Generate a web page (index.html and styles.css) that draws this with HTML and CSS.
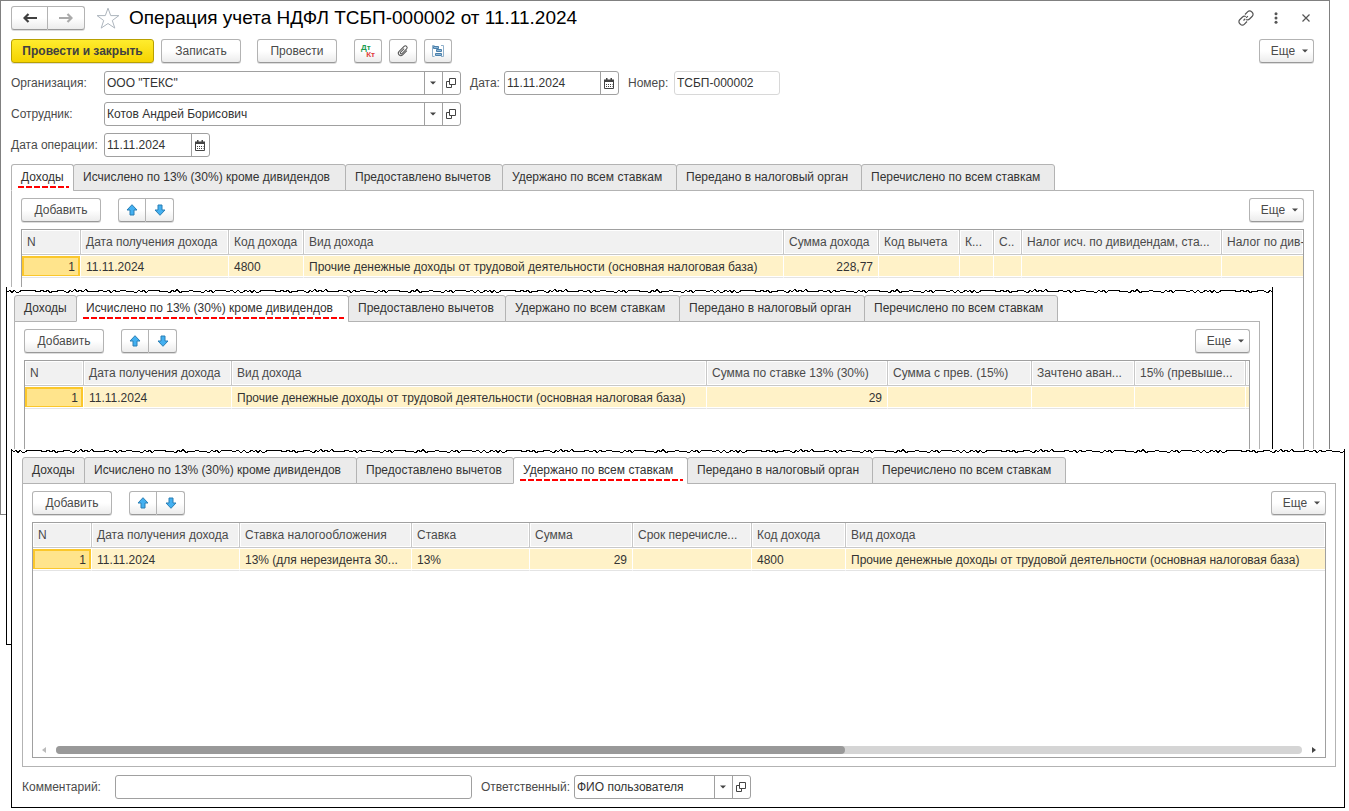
FILE: index.html
```html
<!DOCTYPE html>
<html lang="ru">
<head>
<meta charset="utf-8">
<title>Операция учета НДФЛ ТСБП-000002 от 11.11.2024</title>
<link rel="stylesheet" href="styles.css">
</head>
<body>
<svg class="sprite" aria-hidden="true">
  <symbol id="i-back" viewBox="0 0 14 10"><path d="M5.500 1l-4 4 4 4M2 5h12" fill="none" stroke="currentColor" stroke-width="2.200"/></symbol>
  <symbol id="i-forward" viewBox="0 0 14 10"><path d="M8.500 1l4 4-4 4M12 5H0" fill="none" stroke="currentColor" stroke-width="2.200"/></symbol>
  <symbol id="i-star" viewBox="0 0 24 22"><path d="M12 1.200l2.700 7.400h8.200l-6.600 4.900 2.500 7.600L12 16.500l-6.800 4.600 2.500-7.600L1.100 8.600h8.200z" fill="#fff" stroke="#adb5bd"/></symbol>
  <symbol id="i-link" viewBox="0 0 16 16"><g fill="none" stroke="currentColor" stroke-width="1.200"><path d="M7 4.500l2.800-2.800a2.600 2.600 0 0 1 3.700 0l.8.800a2.600 2.600 0 0 1 0 3.700L11.500 9a2.600 2.600 0 0 1-3.300.4"/><path d="M9 11.500l-2.800 2.800a2.600 2.600 0 0 1-3.700 0l-.8-.8a2.600 2.600 0 0 1 0-3.700L4.500 7a2.600 2.600 0 0 1 3.300-.4"/><path d="M5.500 10.500l5-5" stroke-dasharray="2.500 1.200"/></g></symbol>
  <symbol id="i-dots" viewBox="0 0 4 12"><g fill="currentColor"><circle cx="2" cy="1.700" r="1.500"/><circle cx="2" cy="6" r="1.500"/><circle cx="2" cy="10.300" r="1.500"/></g></symbol>
  <symbol id="i-close" viewBox="0 0 8 8"><path d="M.5.5l7 7M7.500.5l-7 7" stroke="currentColor" stroke-width="1.200"/></symbol>
  <symbol id="i-down" viewBox="0 0 6 4"><path d="M0 .5h6L3 3.500z" fill="currentColor"/></symbol>
  <symbol id="i-open" viewBox="0 0 10 10"><path d="M3.500.5h6v6h-6zM3 3.500H.5v6h5V7" fill="none" stroke="currentColor"/></symbol>
  <symbol id="i-calendar" viewBox="0 0 10 11"><path d="M.5 2.500h9v8h-9z" fill="#fff" stroke="currentColor"/><path d="M0 1.500h10V4H0zM2 0h1.500v2H2zM6.500 0H8v2H6.500z" fill="currentColor"/><path d="M2 6.500h6.500M2 8.500h6.500" stroke="currentColor" stroke-dasharray="1 1"/></symbol>
  <symbol id="i-clip" viewBox="0 0 14 14"><g transform="rotate(45 7 7)" fill="none" stroke="#555"><path d="M9.500 4v6a2.500 2.500 0 0 1-5 0V3a1.800 1.800 0 0 1 3.600 0v6.500a1 1 0 0 1-2 0V4.500"/></g></symbol>
  <symbol id="i-links" viewBox="0 0 14 14"><path d="M3.500 1.500h-2v11h2M10 1.500h2.500v11H10" fill="none" stroke="#8fb0cb"/><path d="M2.500 2.500h5v2h-5zM5.500 5.500h5v2h-5zM4.500 9.500h6v2h-6z" fill="#8fb6d6" stroke="#4a80ab"/></symbol>
  <symbol id="i-up-blue" viewBox="0 0 12 12"><path d="M6 .7l5 5.300H8v5H4V6H1z" fill="#43b0f1" stroke="#2b7fb4"/></symbol>
  <symbol id="i-down-blue" viewBox="0 0 12 12"><path d="M6 11.300L1 6h3V1h4v5h3z" fill="#43b0f1" stroke="#2b7fb4"/></symbol>
  <symbol id="i-scroll-left" viewBox="0 0 4 6"><path d="M4 0v6L0 3z" fill="currentColor"/></symbol>
  <symbol id="i-scroll-right" viewBox="0 0 4 6"><path d="M0 0v6l4-3z" fill="currentColor"/></symbol>
  <pattern id="torn" width="240" height="8" patternUnits="userSpaceOnUse"><path d="M0 3L2 5 4 3 6 6 8 3 10 5 13 5 16 3 21 4 26 3 33 5 36 3 39 5 42 3 44 6 47 4 50 5 53 3 58 4 62 6 64 3 66 5 69 2 71 5 74 3 77 5 80 2 82 5 86 4 90 5 95 3 99 5 103 3 105 6 108 3 111 5 114 4 118 3 122 5 126 4 130 6 133 3 135 5 138 3 140 6 143 3 147 4 151 3 156 5 160 4 164 6 166 3 169 5 171 2 174 6 177 4 181 5 185 3 189 5 193 4 197 6 200 3 202 5 205 3 207 6 210 3 213 4 218 3 222 5 226 3 229 6 232 3 234 5 237 5 240 3" fill="none" stroke="#000" stroke-width="1" shape-rendering="crispEdges"/></pattern>
</svg>

<main class="desktop">

<section class="window window-main" aria-label="Операция учета НДФЛ">
  <header class="titlebar">
    <div class="btn-group">
      <button class="btn btn-nav" aria-label="Назад"><svg class="ic-nav"><use href="#i-back"/></svg></button>
      <button class="btn btn-nav btn-dim" aria-label="Вперед"><svg class="ic-nav"><use href="#i-forward"/></svg></button>
    </div>
    <button class="plain" aria-label="В избранное"><svg class="ic-star"><use href="#i-star"/></svg></button>
    <h1 class="title">Операция учета НДФЛ ТСБП-000002 от 11.11.2024</h1>
    <div class="window-tools">
      <button class="plain" aria-label="Ссылка"><svg class="ic-16"><use href="#i-link"/></svg></button>
      <button class="plain" aria-label="Меню"><svg class="ic-dots"><use href="#i-dots"/></svg></button>
      <button class="plain" aria-label="Закрыть"><svg class="ic-8"><use href="#i-close"/></svg></button>
    </div>
  </header>

  <div class="commands">
    <button class="btn btn-primary">Провести и закрыть</button>
    <button class="btn btn-text">Записать</button>
    <button class="btn btn-text btn-apart">Провести</button>
    <button class="btn btn-icon btn-apart" aria-label="Проводки"><span class="dtkt"><span class="dt">Дт</span><span class="kt">Кт</span></span></button>
    <button class="btn btn-icon" aria-label="Файлы"><svg class="ic-14"><use href="#i-clip"/></svg></button>
    <button class="btn btn-icon" aria-label="Структура подчиненности"><svg class="ic-14"><use href="#i-links"/></svg></button>
    <button class="btn btn-more">Еще<svg class="ic-down"><use href="#i-down"/></svg></button>
  </div>

  <div class="fields">
    <div class="field-row">
      <label class="label label-col" for="org">Организация:</label>
      <div class="box box-ref"><input id="org" value="ООО &quot;ТЕКС&quot;"><button class="box-btn" aria-label="Выбрать"><svg class="ic-down"><use href="#i-down"/></svg></button><button class="box-btn" aria-label="Открыть"><svg class="ic-10"><use href="#i-open"/></svg></button></div>
      <label class="label label-date" for="date">Дата:</label>
      <div class="box box-date"><input id="date" value="11.11.2024"><button class="box-btn" aria-label="Календарь"><svg class="ic-cal"><use href="#i-calendar"/></svg></button></div>
      <label class="label label-num" for="num">Номер:</label>
      <div class="box box-num"><input id="num" value="ТСБП-000002" readonly></div>
    </div>
    <div class="field-row">
      <label class="label label-col" for="emp">Сотрудник:</label>
      <div class="box box-ref"><input id="emp" value="Котов Андрей Борисович"><button class="box-btn" aria-label="Выбрать"><svg class="ic-down"><use href="#i-down"/></svg></button><button class="box-btn" aria-label="Открыть"><svg class="ic-10"><use href="#i-open"/></svg></button></div>
    </div>
    <div class="field-row">
      <label class="label label-col" for="opdate">Дата операции:</label>
      <div class="box box-opdate"><input id="opdate" value="11.11.2024"><button class="box-btn" aria-label="Календарь"><svg class="ic-cal"><use href="#i-calendar"/></svg></button></div>
    </div>
  </div>

  <div class="tabs" role="tablist">
    <button class="tab tab-a active" role="tab"><span>Доходы</span></button>
    <button class="tab tab-b" role="tab"><span>Исчислено по 13% (30%) кроме дивидендов</span></button>
    <button class="tab tab-c" role="tab"><span>Предоставлено вычетов</span></button>
    <button class="tab tab-d" role="tab"><span>Удержано по всем ставкам</span></button>
    <button class="tab tab-e" role="tab"><span>Передано в налоговый орган</span></button>
    <button class="tab tab-f" role="tab"><span>Перечислено по всем ставкам</span></button>
  </div>
  <div class="panel">
    <div class="panel-bar">
      <button class="btn btn-text">Добавить</button>
      <div class="btn-group">
        <button class="btn btn-arrow" aria-label="Вверх"><svg class="ic-12"><use href="#i-up-blue"/></svg></button>
        <button class="btn btn-arrow" aria-label="Вниз"><svg class="ic-12"><use href="#i-down-blue"/></svg></button>
      </div>
      <button class="btn btn-more">Еще<svg class="ic-down"><use href="#i-down"/></svg></button>
    </div>
    <div class="grid">
      <table>
        <colgroup><col style="width:59px"><col style="width:148px"><col style="width:75px"><col style="width:480px"><col style="width:95px"><col style="width:81px"><col style="width:34px"><col style="width:28px"><col style="width:200px"><col></colgroup>
        <thead><tr><th>N</th><th>Дата получения дохода</th><th>Код дохода</th><th>Вид дохода</th><th>Сумма дохода</th><th>Код вычета</th><th>К...</th><th>С..</th><th>Налог исч. по дивидендам, ста...</th><th class="cut">Налог по див-</th></tr></thead>
        <tbody><tr><td class="num current">1</td><td>11.11.2024</td><td>4800</td><td>Прочие денежные доходы от трудовой деятельности (основная налоговая база)</td><td class="num">228,77</td><td></td><td></td><td></td><td></td><td></td></tr></tbody>
      </table>
    </div>
  </div>
</section>

<section class="window window-second" aria-label="Исчислено по 13% (30%)">
  <svg class="torn" aria-hidden="true"><rect width="100%" height="8" fill="url(#torn)"/></svg>
  <div class="tabs" role="tablist">
    <button class="tab tab-a" role="tab"><span>Доходы</span></button>
    <button class="tab tab-b active" role="tab"><span>Исчислено по 13% (30%) кроме дивидендов</span></button>
    <button class="tab tab-c" role="tab"><span>Предоставлено вычетов</span></button>
    <button class="tab tab-d" role="tab"><span>Удержано по всем ставкам</span></button>
    <button class="tab tab-e" role="tab"><span>Передано в налоговый орган</span></button>
    <button class="tab tab-f" role="tab"><span>Перечислено по всем ставкам</span></button>
  </div>
  <div class="panel">
    <div class="panel-bar">
      <button class="btn btn-text">Добавить</button>
      <div class="btn-group">
        <button class="btn btn-arrow" aria-label="Вверх"><svg class="ic-12"><use href="#i-up-blue"/></svg></button>
        <button class="btn btn-arrow" aria-label="Вниз"><svg class="ic-12"><use href="#i-down-blue"/></svg></button>
      </div>
      <button class="btn btn-more">Еще<svg class="ic-down"><use href="#i-down"/></svg></button>
    </div>
    <div class="grid">
      <table>
        <colgroup><col style="width:59px"><col style="width:148px"><col style="width:475px"><col style="width:181px"><col style="width:144px"><col style="width:103px"><col style="width:111px"><col></colgroup>
        <thead><tr><th>N</th><th>Дата получения дохода</th><th>Вид дохода</th><th>Сумма по ставке 13% (30%)</th><th>Сумма с прев. (15%)</th><th>Зачтено аван...</th><th>15% (превыше...</th><th></th></tr></thead>
        <tbody><tr><td class="num current">1</td><td>11.11.2024</td><td>Прочие денежные доходы от трудовой деятельности (основная налоговая база)</td><td class="num">29</td><td></td><td></td><td></td><td></td></tr></tbody>
      </table>
    </div>
  </div>
</section>

<section class="window window-third" aria-label="Удержано по всем ставкам">
  <svg class="torn" aria-hidden="true"><rect width="100%" height="8" fill="url(#torn)"/></svg>
  <div class="tabs" role="tablist">
    <button class="tab tab-a" role="tab"><span>Доходы</span></button>
    <button class="tab tab-b" role="tab"><span>Исчислено по 13% (30%) кроме дивидендов</span></button>
    <button class="tab tab-c" role="tab"><span>Предоставлено вычетов</span></button>
    <button class="tab tab-d active" role="tab"><span>Удержано по всем ставкам</span></button>
    <button class="tab tab-e" role="tab"><span>Передано в налоговый орган</span></button>
    <button class="tab tab-f" role="tab"><span>Перечислено по всем ставкам</span></button>
  </div>
  <div class="panel">
    <div class="panel-bar">
      <button class="btn btn-text">Добавить</button>
      <div class="btn-group">
        <button class="btn btn-arrow" aria-label="Вверх"><svg class="ic-12"><use href="#i-up-blue"/></svg></button>
        <button class="btn btn-arrow" aria-label="Вниз"><svg class="ic-12"><use href="#i-down-blue"/></svg></button>
      </div>
      <button class="btn btn-more">Еще<svg class="ic-down"><use href="#i-down"/></svg></button>
    </div>
    <div class="grid">
      <table>
        <colgroup><col style="width:59px"><col style="width:148px"><col style="width:172px"><col style="width:118px"><col style="width:103px"><col style="width:119px"><col style="width:94px"><col></colgroup>
        <thead><tr><th>N</th><th>Дата получения дохода</th><th>Ставка налогообложения</th><th>Ставка</th><th>Сумма</th><th>Срок перечисле...</th><th>Код дохода</th><th>Вид дохода</th></tr></thead>
        <tbody><tr><td class="num current">1</td><td>11.11.2024</td><td>13% (для нерезидента 30...</td><td>13%</td><td class="num">29</td><td></td><td>4800</td><td>Прочие денежные доходы от трудовой деятельности (основная налоговая база)</td></tr></tbody>
      </table>
      <div class="scroll">
        <svg class="ic-scroll dim"><use href="#i-scroll-left"/></svg>
        <div class="track"><div class="thumb" style="width:63.300%"></div></div>
        <svg class="ic-scroll"><use href="#i-scroll-right"/></svg>
      </div>
    </div>
  </div>
  <footer class="footer">
    <label class="label label-comment" for="comment">Комментарий:</label>
    <div class="box box-comment"><input id="comment"></div>
    <label class="label label-resp" for="resp">Ответственный:</label>
    <div class="box box-resp"><input id="resp" value="ФИО пользователя"><button class="box-btn" aria-label="Выбрать"><svg class="ic-down"><use href="#i-down"/></svg></button><button class="box-btn" aria-label="Открыть"><svg class="ic-10"><use href="#i-open"/></svg></button></div>
  </footer>
</section>

</main>
</body>
</html>
```
FILE: styles.css
```css
* { box-sizing: border-box; }

body {
  margin: 0;
  background: #fff;
  color: #333;
  font: 12px/16px "Liberation Sans", Arial, sans-serif;
}

button, input { font: inherit; color: inherit; }
button { padding: 0; }
svg { display: block; flex: none; }

.sprite { position: absolute; width: 0; height: 0; }

.desktop {
  position: relative;
  min-height: 100vh;
  overflow: hidden;
}

/* Windows stacked over one another */
.window {
  position: absolute;
  display: flex;
  flex-direction: column;
  background: #fff;
}
.window-main {
  top: 0;
  left: 0;
  right: 19px;
  min-height: 515px;
  padding: 4px 15px 10px 10px;
  border: 1px solid #808080;
}
.window-second {
  top: 287px;
  left: 6px;
  right: 76px;
  min-height: 358px;
  padding: 0 12px 10px 7px;
  border: 1px solid #000;
  border-top: 0;
}
.window-third {
  top: 449px;
  left: 11px;
  right: 4px;
  padding: 0 8px 8px 10px;
  border: 1px solid #000;
  border-top: 0;
}
.torn { height: 8px; }
.window-second .torn { width: calc(100% + 20px); margin: 0 -12px 0 -8px; }
.window-third .torn { width: calc(100% + 19px); margin: -2px -9px 2px -10px; }

/* Title */
.titlebar { display: flex; align-items: center; height: 25px; }
.title {
  margin: 0 0 0 9px;
  color: #000;
  font-size: 19px;
  font-weight: 400;
  line-height: 24px;
  white-space: nowrap;
}
.plain {
  display: flex;
  align-items: center;
  justify-content: center;
  min-width: 16px;
  border: 0;
  background: none;
  color: #555;
}
.titlebar > .plain { margin-left: 11px; }
.window-tools { display: flex; gap: 14px; margin-left: auto; }

/* Buttons */
.btn {
  display: inline-flex;
  align-items: center;
  justify-content: center;
  height: 24px;
  border: 1px solid #b3b3b3;
  border-bottom-color: #999;
  border-radius: 3px;
  background: linear-gradient(#fff 50%, #ececec);
  box-shadow: 0 1px 0 #ddd;
  color: #4a4a4a;
  white-space: nowrap;
}
.btn-group { display: flex; }
.btn-group .btn:first-child { border-radius: 3px 0 0 3px; }
.btn-group .btn:last-child { border-left: 0; border-radius: 0 3px 3px 0; }
.btn-nav { width: 37px; color: #404040; }
.btn-dim { color: #aaa; }
.btn-primary {
  width: 143px;
  border-color: #b8a000;
  background: linear-gradient(#ffec2e, #f5d300);
  color: #404040;
  font-weight: 700;
}
.btn-text { width: 80px; }
.btn-icon { width: 28px; }
.btn-arrow { width: 28px; }
.btn-more { width: 55px; gap: 7px; margin-left: auto; padding-left: 6px; }
.dtkt { display: grid; width: 14px; font-size: 8px; font-weight: 700; line-height: 7px; }
.dt { color: #1c9c50; text-align: left; }
.kt { color: #e03c3c; text-align: right; }

.commands { display: flex; gap: 7px; margin-top: 9px; }
.btn-apart { margin-left: 9px; }
.btn-icon.btn-apart { margin-left: 10px; }

/* Fields */
.fields { display: flex; flex-direction: column; gap: 7px; margin-top: 8px; }
.field-row, .footer { display: flex; align-items: center; }
.label { color: #4a4a4a; white-space: nowrap; }
.label-col { width: 93px; }
.label-date { width: 43px; padding-left: 9px; }
.label-num { width: 55px; padding-left: 9px; }
.box {
  display: flex;
  height: 24px;
  border: 1px solid #a0a0a0;
  border-radius: 3px;
  background: #fff;
}
.box input {
  flex: 1;
  min-width: 0;
  padding: 0 2px;
  border: 0;
  outline: 0;
  background: none;
}
.box-btn {
  display: flex;
  align-items: center;
  justify-content: center;
  width: 18px;
  padding-right: 2px;
  border: 0;
  border-left: 1px solid #a0a0a0;
  background: none;
  color: #444;
}
.box-ref { width: 357px; }
.box-date { width: 115px; }
.box-num { width: 106px; border-color: #d8d8d8; }
.box-opdate { width: 106px; }

/* Tabs */
.tabs { position: relative; z-index: 1; display: flex; margin-top: 7px; }
.window .torn + .tabs { margin-top: 0; }
.tab {
  height: 27px;
  margin-right: -1px;
  padding: 0 9px 2px;
  border: 1px solid #b3b3b3;
  border-radius: 3px 3px 0 0;
  background: #ebebeb;
  text-align: left;
  white-space: nowrap;
}
.tab-a { width: 63px; }
.tab-b { width: 273px; }
.tab-c { width: 158px; }
.tab-d { width: 175px; }
.tab-e { width: 186px; }
.tab-f { width: 194px; }
.tab.active { padding-right: 4px; padding-left: 6px; border-bottom-color: #fff; background: #fff; }
.active span {
  display: block;
  padding: 4px 0 3px 3px;
  background: repeating-linear-gradient(90deg, #f00 0 6px, transparent 6px 8px) bottom / 100% 2px no-repeat;
}

/* Tab pages */
.panel {
  display: flex;
  flex: 1;
  flex-direction: column;
  margin-top: -1px;
  padding: 7px 9px 8px;
  border: 1px solid #b3b3b3;
}
.panel-bar { display: flex; gap: 17px; margin-bottom: 7px; }
.grid {
  display: flex;
  flex: 1;
  flex-direction: column;
  border: 1px solid #a0a0a0;
  overflow: hidden;
}
.window-third .grid { min-height: 236px; }

table {
  width: 100%;
  table-layout: fixed;
  border-collapse: separate;
  border-spacing: 0;
}
th, td {
  overflow: hidden;
  padding: 0 5px;
  text-align: left;
  text-overflow: ellipsis;
  white-space: nowrap;
}
th {
  height: 25px;
  border-right: 1px solid #c8c8c8;
  border-bottom: 1px solid #c8c8c8;
  background: #f1f1f1;
  box-shadow: inset 0 0 0 1px #fff;
  color: #4a4a4a;
  font-weight: 400;
}
th.cut { padding-right: 0; text-overflow: clip; }
td {
  height: 23px;
  border-top: 1px solid #fff;
  border-right: 1px solid #fff;
  border-bottom: 1px solid #e4e4e4;
  background: #fff2c8;
  box-shadow: inset 0 -1px 0 #fff;
}
th:last-child, td:last-child { border-right: 0; }
td.num { text-align: right; }
td.current {
  background: #ffe48c;
  box-shadow: inset 0 -1px 0 #fff, inset 0 0 0 2px #fbc72b;
}

.scroll {
  display: flex;
  align-items: center;
  justify-content: space-between;
  gap: 10px;
  margin-top: auto;
  padding: 0 9px 3px;
  color: #444;
}
.track { flex: 1; height: 8px; border-radius: 4px; background: #d5d5d5; }
.thumb { height: 8px; border-radius: 4px; background: #999; }
.dim { color: #bbb; }

.footer { margin-top: 8px; }
.label-comment { width: 93px; }
.box-comment { width: 357px; }
.label-resp { width: 102px; padding-left: 9px; }
.box-resp { width: 177px; }

/* Icon sizes */
.ic-nav { width: 14px; height: 10px; }
.ic-star { width: 24px; height: 22px; }
.ic-16 { width: 16px; height: 16px; }
.ic-14 { width: 14px; height: 14px; }
.ic-12 { width: 12px; height: 12px; }
.ic-10 { width: 10px; height: 10px; }
.ic-8 { width: 8px; height: 8px; }
.ic-dots { width: 4px; height: 12px; }
.ic-down { width: 6px; height: 4px; }
.ic-cal { width: 10px; height: 11px; }
.ic-scroll { width: 4px; height: 6px; }
```
